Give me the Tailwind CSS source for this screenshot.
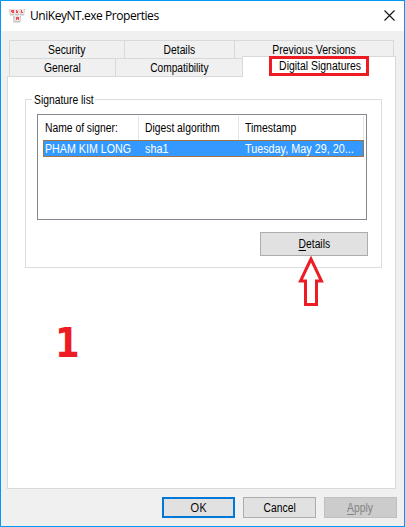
<!DOCTYPE html>
<html lang="en">
<head>
<meta charset="utf-8">
<title>UniKeyNT.exe Properties</title>
<script src="https://cdn.jsdelivr.net/npm/@tailwindcss/browser@4"></script>
</head>
<body class="w-[405px] h-[527px] overflow-hidden">
<main class="w-[405px] h-[527px] border border-[#0099f5] bg-[#f0f0f0] flex flex-col text-black font-['Liberation_Sans',sans-serif] text-[12px] leading-[14px] whitespace-nowrap">
  <header class="h-[30px] shrink-0 bg-white flex items-center pl-2 pr-[9px]">
    <svg class="w-4 h-4 shrink-0" viewBox="0 0 16 16">
      <g fill="#c9c6c6"><path d="M0 1h5v6.500H1z"/><path d="M5.500 1h5v6.500h-5z"/><path d="M11 1h5l-1 6.500h-4z"/><path d="M4 8h8l-.5 6.500H4.500z"/></g>
      <g fill="#f3e4e4"><path d="M1 1h4v5H1.500z"/><path d="M6 1h4v5H6z"/><path d="M11.500 1h3.500v5h-3.500z"/><path d="M5.500 8h5.500v5h-5.500z"/></g>
      <g fill="#ee4f54"><path d="M2 2h3v3H3v-1H2z"/><path d="M7 2h1v3h-1zM8 3h1v2h-1z"/><path d="M12 2h1v3h-1zM13 4h1v1h-1z"/><path d="M7 9h3v3h-1v-1h-1v1h-1z"/></g>
    </svg>
    <h1 class="ml-[5px] font-['Open_Sans','Noto_Sans',sans-serif] text-[12px] leading-4 tracking-[-0.45px]">UniKeyNT.exe Properties</h1>
    <svg class="w-[11px] h-[11px] ml-auto -mt-[2px]" viewBox="0 0 11 11"><path d="M.5.5l10 10M10.500.5l-10 10" stroke="#111" stroke-width="1.100"/></svg>
  </header>
  <div class="h-[9px] shrink-0"></div>
  <nav class="ml-2 w-[386px] h-[36px] shrink-0 grid grid-rows-[18px_18px]">
    <div class="w-[385px] flex border-t border-l border-r border-[#d9d9d9] text-center">
      <div class="w-[115px] border-r border-[#d9d9d9] pt-[2px]"><span class="inline-block scale-x-[.86]">Security</span></div>
      <div class="w-[110px] border-r border-[#d9d9d9] pt-[2px]"><span class="inline-block scale-x-[.86]">Details</span></div>
      <div class="flex-1 pt-[2px]"><span class="inline-block scale-x-[.87]">Previous Versions</span></div>
    </div>
    <div class="flex text-center">
      <div class="w-[107px] border-t border-x border-[#d9d9d9] pt-[2px]"><span class="inline-block scale-x-[.86]">General</span></div>
      <div class="w-[126px] border-t border-[#d9d9d9] pt-[2px]"><span class="inline-block scale-x-[.85]">Compatibility</span></div>
      <div class="relative z-10 w-[154px] h-[21px] -mt-[2px] bg-white border-t border-x border-[#d9d9d9]">
        <div class="absolute left-[26px] -top-px w-[100px] h-[20px] border-3 border-[#ed1c24] flex items-center justify-center"><span class="inline-block shrink-0 scale-x-[.87] ml-[2px]">Digital Signatures</span></div>
      </div>
    </div>
  </nav>
  <section class="ml-[6px] w-[389px] h-[413px] shrink-0 bg-white border border-[#d9d9d9] pt-[22px] pl-[17px]">
    <div class="relative w-[357px] h-[169px] border border-[#dcdcdc] pt-[14px] pl-[11px]">
      <div class="absolute left-[6px] -top-[7px] w-[63px] bg-white px-[2px]"><span class="inline-block origin-left scale-x-[.86]">Signature list</span></div>
      <div class="w-[330px] h-[106px] border border-[#828790] pl-[5px]">
        <div class="flex h-[25px] pt-px w-[321px]">
          <div class="w-[96px] shrink-0 border-r border-[#e5e5e5] pl-[2px] pt-[5px]"><span class="inline-block origin-left scale-x-[.86]">Name of signer:</span></div>
          <div class="w-[100px] shrink-0 border-r border-[#e5e5e5] pl-[6px] pt-[5px]"><span class="inline-block origin-left scale-x-[.86]">Digest algorithm</span></div>
          <div class="flex-1 border-r border-[#e5e5e5] pl-[6px] pt-[5px]"><span class="inline-block origin-left scale-x-[.87]">Timestamp</span></div>
        </div>
        <div class="h-[17px] w-[321px] p-px bg-[repeating-conic-gradient(#cc6600_0_25%,#7a808a_0_50%)] bg-[length:2px_2px]">
          <div class="flex h-[15px] leading-[16px] bg-[#3399ff] text-white">
            <div class="w-[95px] shrink-0 pl-px"><span class="inline-block origin-left scale-x-[.89]">PHAM KIM LONG</span></div>
            <div class="w-[100px] shrink-0 pl-[6px]"><span class="inline-block origin-left scale-x-[.9]">sha1</span></div>
            <div class="w-[123px] shrink-0 pl-[6px]"><span class="inline-block origin-left scale-x-[.9]">Tuesday, May 29, 20...</span></div>
          </div>
        </div>
      </div>
      <button class="block mt-[12px] ml-[223px] w-[108px] h-[24px] bg-[#e1e1e1] border border-[#adadad]"><span class="inline-block scale-x-[.86]"><span class="underline underline-offset-2">D</span>etails</span></button>
      <svg class="absolute left-[271px] top-[156px] w-[28px] h-[50px]" viewBox="0 0 28 50"><path d="M14 3L3.500 25H8.500V48.500H19.500V25H24.500Z" fill="white" stroke="#ed1c24" stroke-width="3"/></svg>
    </div>
    <div class="mt-[51px] ml-[30px] font-['DejaVu_Sans_Condensed','DejaVu_Sans',sans-serif] [font-stretch:condensed] font-bold text-[41px] leading-[48px] text-[#ed1c24] origin-left scale-x-[.96]">1</div>
  </section>
  <footer class="flex pt-2 pl-[161px]">
    <button class="w-[73px] h-[21px] bg-[#e1e1e1] border-2 border-[#0078d7] font-['Open_Sans',sans-serif] text-[12px] leading-none"><span class="inline-block scale-x-[.97]">OK</span></button>
    <button class="ml-2 w-[73px] h-[21px] bg-[#e1e1e1] border border-[#adadad]"><span class="inline-block scale-x-[.86]">Cancel</span></button>
    <button class="ml-2 w-[73px] h-[21px] bg-[#cccccc] border border-[#bfbfbf] text-[#838383]"><span class="inline-block scale-x-[.86]"><span class="underline underline-offset-2">A</span>pply</span></button>
  </footer>
</main>
</body>
</html>
